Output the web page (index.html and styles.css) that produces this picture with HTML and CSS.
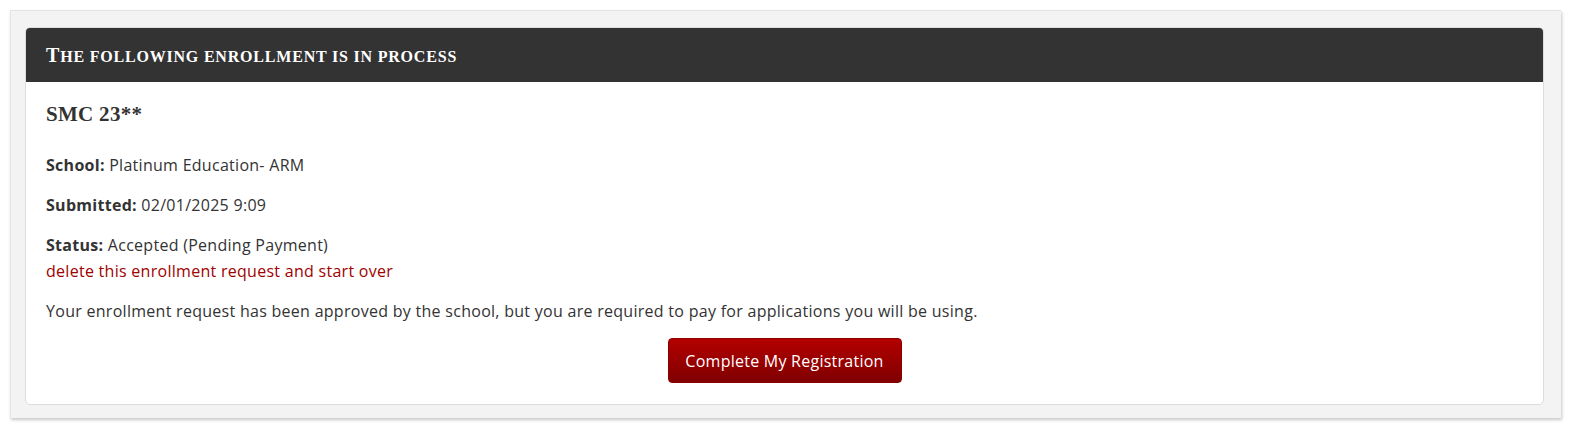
FILE: index.html
```html
<!DOCTYPE html>
<html>
<head>
<meta charset="utf-8">
<link rel="stylesheet" href="styles.css">
</head>
<body>
<div class="outer">
  <div class="panel">
    <div class="panel-heading">The following enrollment is in process</div>
    <div class="panel-body">
      <h3 class="course">SMC 23**</h3>
      <p class="row"><b>School:</b> Platinum Education- ARM</p>
      <p class="row"><b>Submitted:</b> 02/01/2025 9:09</p>
      <p class="row tight"><b>Status:</b> Accepted (Pending Payment)<br><a class="del" href="#">delete this enrollment request and start over</a></p>
      <p class="row">Your enrollment request has been approved by the school, but you are required to pay for applications you will be using.</p>
      <div class="actions"><button class="btn">Complete My Registration</button></div>
    </div>
  </div>
</div>
</body>
</html>
```

FILE: styles.css
```css
html, body {
  margin: 0;
  padding: 0;
  background: #ffffff;
}
body {
  padding: 10px 11px 11px 10px;
  font-family: "Open Sans", Lato, sans-serif;
  font-size: 16px;
  letter-spacing: 0.28px;
  color: #333333;
}
.outer {
  background: #f3f3f3;
  border-top: 1px solid #e4e4e4;
  border-left: 1px solid #e4e4e4;
  box-shadow: 1px 2px 3px rgba(0,0,0,0.22);
  padding: 16px 17px 11px 14px;
  height: 380px;
}
.panel {
  background: #ffffff;
  border: 1px solid #dcdcdc;
  border-radius: 5px;
  overflow: hidden;
  height: 376px;
}
.panel-heading {
  background: #333333;
  color: #ffffff;
  height: 54px;
  line-height: 54px;
  padding: 0 20px;
  font-family: "Liberation Serif", serif;
  font-weight: bold;
  font-size: 16px;
  letter-spacing: 0.8px;
  text-transform: uppercase;
}
.panel-heading::first-letter {
  font-size: 20px;
}
.panel-body {
  padding: 15px 20px 0 20px;
}
.course {
  margin: 0 0 21px 0;
  font-family: "Liberation Serif", serif;
  font-weight: bold;
  font-size: 21px;
  line-height: 34px;
  letter-spacing: 0.3px;
  color: #333333;
}
.row {
  margin: 0 0 14px 0;
  line-height: 26px;
}
.row b {
  font-weight: bold;
}
.del {
  color: #a00000;
  text-decoration: none;
}
.actions {
  display: flex;
  justify-content: center;
}
.btn {
  font-family: "Open Sans", Lato, sans-serif;
  font-size: 16px;
  letter-spacing: 0.25px;
  color: #ffffff;
  background: linear-gradient(#b30000, #7f0000);
  border: 1px solid #8a0000;
  border-radius: 4px;
  width: 234px;
  height: 45px;
  cursor: pointer;
}
```
